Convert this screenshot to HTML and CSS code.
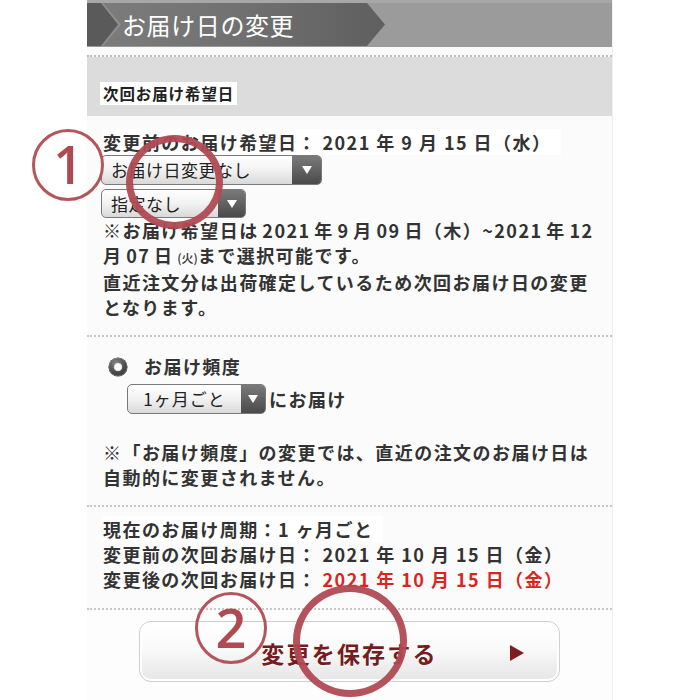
FILE: index.html
```html
<!DOCTYPE html>
<html lang="ja">
<head>
<meta charset="utf-8">
<title>お届け日の変更</title>
<link rel="stylesheet" href="styles.css">
</head>
<body>
<div class="panel">
  <div class="header">
    <div class="ribbon"><span class="title">お届け日の変更</span></div>
  </div>
  <div class="sub"><span class="sublabel">次回お届け希望日</span></div>

  <div class="sec sec1">
    <div class="line"><span class="hl">変更前のお届け希望日： 2021 年 9 月 15 日（水）</span></div>
    <div class="select s1"><span class="sel-text">お届け日変更なし</span><span class="sel-arrow"><i class="tri"></i></span></div>
    <div class="select s2"><span class="sel-text">指定なし</span><span class="sel-arrow"><i class="tri"></i></span></div>
    <p class="note note1">※お届け希望日は 2021 年 9 月 09 日（木）~2021 年 12<br>月 07 日 <span class="small">(火)</span>まで選択可能です。<br>直近注文分は出荷確定しているため次回お届け日の変更<br>となります。</p>
  </div>

  <div class="sec sec2">
    <div class="radio-row"><span class="radio"></span><span>お届け頻度</span></div>
    <div class="freq-row">
      <div class="select s3"><span class="sel-text">1ヶ月ごと</span><span class="sel-arrow"><i class="tri"></i></span></div>
      <span class="freq-label">にお届け</span>
    </div>
    <p class="note note2">※「お届け頻度」の変更では、直近の注文のお届け日は<br>自動的に変更されません。</p>
  </div>

  <div class="sec sec3">
    <div class="line"><span class="hl">現在のお届け周期：1 ヶ月ごと</span></div>
    <div class="line">変更前の次回お届け日： 2021 年 10 月 15 日（金）</div>
    <div class="line">変更後の次回お届け日： <span class="red">2021 年 10 月 15 日（金）</span></div>
  </div>

  <div class="btnarea">
    <div class="btn">
      <span></span>
      <span class="btn-text">変更を保存する</span>
      <span class="btn-arrow"></span>
    </div>
  </div>
</div>

<div class="annot num n1">1</div>
<div class="annot ring r1"></div>
<div class="annot num n2">2</div>
<div class="annot ring r2"></div>
</body>
</html>
```

FILE: styles.css
```css
html, body {
  margin: 0;
  padding: 0;
  background: #ffffff;
}

body {
  font-family: "Noto Sans CJK JP", "Noto Sans", sans-serif;
  color: #333333;
  position: relative;
  width: 700px;
  height: 700px;
  overflow: hidden;
}

.panel {
  width: 526px;
  margin: 0 auto;
  background: #fbfbfb;
  border-right: 1px solid #efefef;
  box-sizing: border-box;
}

/* header */
.header {
  height: 47px;
  background: #9b9b9b;
  border-top: 3px solid #a7a7a7;
  box-sizing: border-box;
  background-clip: padding-box;
}

.ribbon {
  position: relative;
  width: 298px;
  height: 43px;
  background: linear-gradient(90deg, #7d7d7d 0%, #717171 50%, #5f5f5f 100%);
  clip-path: polygon(0 0, 280px 0, 298px 50%, 280px 100%, 0 100%);
  display: flex;
  align-items: center;
}

.ribbon::before {
  content: "";
  position: absolute;
  left: 0;
  top: 0;
  width: 34px;
  height: 43px;
  background: #8e8e8e;
  clip-path: polygon(0 0, 16px 0, 34px 50%, 16px 100%, 0 100%);
}

.ribbon::after {
  content: "";
  position: absolute;
  left: 0;
  top: 0;
  width: 32px;
  height: 43px;
  background: #5a5a5a;
  clip-path: polygon(0 0, 14px 0, 31px 50%, 14px 100%, 0 100%);
}

.title {
  position: relative;
  z-index: 1;
  margin-left: 35px;
  color: #ffffff;
  font-size: 24px;
  font-weight: 400;
  letter-spacing: 0.6px;
  line-height: 43px;
}

/* sub header */
.sub {
  margin-top: 8px;
  height: 61px;
  border-top: 2px dotted #bcbcbc;
  background: linear-gradient(#dcdcdc, #dcdcdc) padding-box;
  box-sizing: border-box;
  padding: 24px 0 0 13px;
}

.sublabel {
  display: inline-block;
  background: #ffffff;
  font-size: 15.5px;
  font-weight: 700;
  color: #222;
  line-height: 23px;
  padding: 0 3px 0 3px;
  letter-spacing: 0.9px;
}

/* sections */
.sec {
  padding-left: 16px;
  padding-right: 10px;
  font-size: 18px;
  font-weight: 700;
  letter-spacing: 1.45px;
  line-height: 25px;
}

.sec1 {
  padding-top: 14px;
  padding-bottom: 15px;
}

.sec2 {
  border-top: 2px dotted #c8c8c8;
  padding-top: 17px;
  padding-bottom: 15px;
}

.sec3 {
  border-top: 2px dotted #c8c8c8;
  padding-top: 10px;
  padding-bottom: 16px;
}

.line {
  height: 25px;
  white-space: nowrap;
}

.hl {
  background: #ffffff;
  padding-right: 10px;
}

.note {
  margin: 0;
  white-space: nowrap;
}

.note1 {
  word-spacing: -1.8px;
}

.small {
  font-size: 12px;
  font-weight: 500;
  letter-spacing: 0;
}

.red {
  color: #d8261e;
}

/* select */
.select {
  display: flex;
  height: 30px;
  box-sizing: border-box;
  border: 1px solid #7a7a7a;
  border-radius: 5px;
  overflow: hidden;
  background: linear-gradient(#ffffff 0%, #f2f2f2 50%, #d9d9d9 100%);
  font-weight: 400;
  font-size: 17px;
  letter-spacing: 0.5px;
  color: #222222;
}

.sel-text {
  flex: 1;
  line-height: 27px;
  padding-left: 9px;
  white-space: nowrap;
}

.sel-arrow {
  width: 27px;
  background: linear-gradient(#7a7a7a, #4a4a4a);
  display: flex;
  align-items: center;
  justify-content: center;
}

.tri {
  width: 0;
  height: 0;
  border-left: 5px solid transparent;
  border-right: 5px solid transparent;
  border-top: 8px solid #ffffff;
}

.s1 {
  width: 221px;
  margin-left: -2px;
}

.s1 .sel-arrow {
  width: 29px;
}

.s2 {
  width: 145px;
  height: 29px;
  margin-left: -2px;
  margin-top: 4px;
}

.s3 {
  width: 139px;
}

.s3 .sel-text {
  padding-left: 0;
  text-align: center;
  letter-spacing: 1px;
}

.s3 .sel-arrow {
  width: 24px;
}

/* radio */
.radio-row {
  display: flex;
  align-items: center;
  gap: 17px;
  padding-left: 6px;
  height: 25px;
}

.radio {
  width: 18px;
  height: 18px;
  border-radius: 50%;
  background:
    radial-gradient(circle at 50% 50%, #ffffff 0 3px, #d6d6d6 3.8px, rgba(0,0,0,0) 4.6px),
    radial-gradient(circle at 40% 30%, #8a8a8a 0%, #4a4a4a 55%, #333333 100%);
  box-shadow: 0 0 0 0.6px #3a3a3a;
}

.freq-row {
  display: flex;
  align-items: center;
  gap: 3px;
  margin-top: 5px;
  margin-left: 24px;
}

.note2 {
  margin-top: 26px;
}

/* button */
.btnarea {
  border-top: 2px dotted #c8c8c8;
  padding: 11px 0 20px 0;
  display: flex;
  justify-content: center;
  background: #fdfdfd;
}

.btn {
  width: 421px;
  height: 61px;
  box-sizing: border-box;
  border: 1px solid #cfcfcf;
  border-radius: 12px;
  background: linear-gradient(#ffffff 0%, #fafafa 45%, #eeeeee 75%, #e6e6e6 100%);
  box-shadow: inset 0 0 0 2px #ffffff;
  display: grid;
  grid-template-columns: 1fr auto 1fr;
  align-items: center;
  padding: 0 35px 0 35px;
}

.btn-text {
  font-size: 23px;
  font-weight: 700;
  color: #741c20;
  letter-spacing: 2.2px;
  text-shadow: 0 1px 0 #ffffff;
  padding-top: 2px;
}

.btn-arrow {
  justify-self: end;
  width: 0;
  height: 0;
  border-top: 8px solid transparent;
  border-bottom: 8px solid transparent;
  border-left: 14px solid #7e1d22;
  margin-top: 2px;
}

/* annotations overlaying the screenshot */
.annot {
  position: absolute;
  box-sizing: border-box;
  border-radius: 50%;
}

.num {
  border: 3px solid #b3555b;
  display: flex;
  align-items: center;
  justify-content: center;
  color: #b04a51;
  font-family: "Open Sans", "Noto Sans", sans-serif;
  font-weight: 600;
  line-height: 1;
}

.n1 {
  left: 32px;
  top: 129px;
  width: 72px;
  height: 72px;
  font-size: 52px;
  padding-bottom: 2px;
}

.n2 {
  left: 195px;
  top: 592px;
  width: 72px;
  height: 72px;
  font-size: 54px;
  padding-bottom: 2px;
}

.ring {
  border: 7px solid rgba(176, 74, 82, 0.95);
}

.r1 {
  left: 126px;
  top: 135px;
  width: 97px;
  height: 94px;
}

.r2 {
  left: 293px;
  top: 585px;
  width: 114px;
  height: 112px;
}
```
